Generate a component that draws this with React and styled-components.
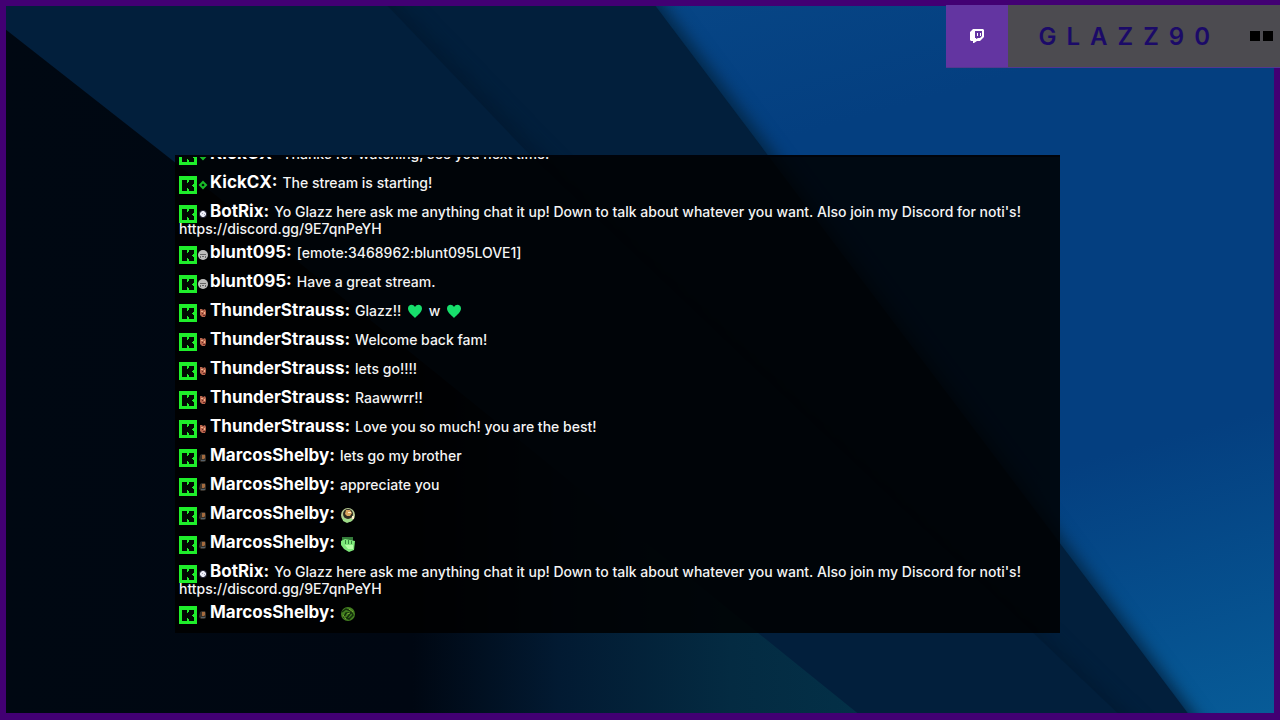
import React from 'react'
import styled, { createGlobalStyle } from 'styled-components'

const GlobalStyle = createGlobalStyle`
    * {
        box-sizing: border-box;
    }
    body {
        margin: 0;
        background: #00060f;
        font-family: Inter, 'Liberation Sans', sans-serif;
    }
`;

const Stage = styled.main`
    position: relative;
    display: grid;
    grid-template-columns: 175fr 885fr 220fr;
    grid-template-rows: 155fr 478fr 87fr;
    height: 100vh;
    overflow: hidden;
`;

const Backdrop = styled.svg`
    position: absolute;
    inset: 0;
    width: 100%;
    height: 100%;
`;

const Frame = styled.div`
    position: absolute;
    inset: 0;
    border: 6px solid #420073;
    border-bottom-width: 7px;
`;

const Channel = styled.header`
    position: relative;
    grid-column: 1 / -1;
    grid-row: 1;
    justify-self: end;
    align-self: start;
    display: flex;
    margin-top: 5px;
    height: 62px;
    background: #4c4b50;
    box-shadow: 0 1px 0 #52388f;
`;

const ChannelLogo = styled.div`
    display: flex;
    align-items: center;
    justify-content: center;
    width: 62px;
    background: #6335a1;
`;

const ChannelName = styled.h1`
    display: flex;
    align-items: center;
    margin: 0;
    padding-left: 30px;
    color: #1b0a68;
    font-size: 24px;
    font-weight: 600;
    letter-spacing: 10px;
`;

const Blocks = styled.div`
    display: flex;
    align-items: center;
    gap: 3px;
    padding: 0 7px 0 30px;
`;

const Block = styled.span`
    width: 10px;
    height: 10px;
    background: #000;
`;

const ChatPanel = styled.section`
    position: relative;
    grid-column: 2;
    grid-row: 2;
    display: flex;
    flex-direction: column;
    justify-content: flex-end;
    min-height: 0;
    padding: 0 4px;
    overflow: hidden;
    border-top: 2px solid #00030a;
    background: rgba(0, 0, 0, 0.86);
`;

const Messages = styled.ul`
    flex-shrink: 0;
    margin: 0;
    padding: 0;
    list-style: none;
`;

const Message = styled.li`
    min-height: 29px;
    padding-bottom: 7px;
    color: #f4f4f4;
    font-size: 14px;
    font-weight: 500;
    line-height: 17px;
`;

const PlatformBadge = styled.svg`
    width: 18px;
    height: 18px;
    margin: -6px 1px -6px 0;
`;

const Avatar = styled.svg`
    width: 10px;
    height: 10px;
    margin: 0 2px -2px 0;
`;

const UserName = styled.strong`
    margin-right: 5px;
    color: #fff;
    font-size: 17px;
    font-weight: 700;
    line-height: 0;
`;

const Link = styled.a`
    color: inherit;
    text-decoration: none;
`;

const Emote = styled.svg`
    width: 16px;
    height: 16px;
    margin: ${({ $spaced }) => ($spaced ? '-6px 2px -3px' : '-6px 0 -4px')};
`;

const Kick = () => (
    <PlatformBadge viewBox="0 0 18 18" aria-label="Kick">
        <path fill="#1fee2b" d="M0 0h18v18H0z" />
        <path fill="#020a03" d="M3 4h5v3h1V6h1V4h5v4h-1v1h-1v1h1v1h1v4h-5v-2H9v-1H8v3H3z" />
    </PlatformBadge>
)

const avatars = {
    kick: <path fill="none" stroke="#19bd29" strokeWidth="2" d="M5 2l3 3-3 3-3-3z" />,
    bot: (
        <>
            <circle cx="5" cy="5" r="4" fill="#2a2c3c" />
            <path fill="#eceef8" d="M4 2h2l2 2v2L6 8H4L2 6V4z" />
            <path fill="#9da2b8" d="M4 4h1v1H4zM6 5h1v1H6z" />
        </>
    ),
    blunt: (
        <>
            <circle cx="5" cy="5" r="5" fill="#bdbdbb" />
            <path fill="#666" d="M2 4h6v1H2zM2 6h1v2H2zM4 6h2v1H4zM7 6h1v2H7z" />
        </>
    ),
    thunder: (
        <>
            <path fill="#b7654d" d="M2 1h2l1 1 2-1 1 2v3l-1 3H4L2 7z" />
            <path fill="#efb38d" d="M3 3h2v1H3zM6 4h1v2H6z" />
            <path fill="#6d2825" d="M4 5h1v1H4zM5 7h2v1H5z" />
        </>
    ),
    marcos: (
        <>
            <path fill="#35302a" d="M2 2l2-1h3l1 2v5L6 9H3L1 7z" />
            <path fill="#a36a3e" d="M4 2h3v3l-1 1H4z" />
            <path fill="#54606a" d="M3 7h4v1H3z" />
        </>
    ),
}

const emotes = {
    heart: (
        <path
            fill="#17df6c"
            d="M8 15C5 12 1 9 1 5.500C1 1.500 6 .5 8 4c2-3.500 7-2.500 7 1.500C15 9 11 12 8 15z"
        />
    ),
    face: (
        <>
            <circle cx="8" cy="8" r="7" fill="#b6c993" />
            <circle cx="8" cy="7" r="5" fill="#2d2a20" />
            <path fill="#d8a45f" d="M6 3h4l2 3-2 3H7L5 7z" />
            <path fill="#9edb88" d="M2 9l3 3h6l3-3-2 5-5 2-4-2z" />
            <path fill="#fff0ca" d="M8 5h3v1H8zM12 9h2v3h-2z" />
        </>
    ),
    fist: (
        <>
            <path fill="#347b3a" d="M2 1h11v4H2z" />
            <path fill="#7ee97a" d="M1 5l4-2 10 2-1 9-5 2-5-3-3-4z" />
            <path fill="#b5ffa6" d="M5 9h8v4H8z" />
            <path fill="#358d3d" d="M5 4h1v4H5zM8 4h1v4H8zM11 5h1v3h-1z" />
        </>
    ),
    ball: (
        <>
            <circle cx="8" cy="8" r="7" fill="#427e20" />
            <path
                fill="none"
                stroke="#142f0c"
                strokeWidth="1.500"
                d="M2 6l4-3 5 2 2 4-4 4-5-2 2-4h5M7 12l5-7"
            />
            <path fill="none" stroke="#79aa34" d="M3 9l3 4M9 3l4 3M7 8l3-1" />
        </>
    ),
}

const Icon = ({ name, spaced }) => (
    <Emote viewBox="0 0 16 16" aria-label={name} $spaced={spaced}>{emotes[name]}</Emote>
)

const BotText = () => (
    <>
        Yo Glazz here ask me anything chat it up! Down to talk about whatever you want. Also join
        my Discord for noti's!{' '}
        <Link href="https://discord.gg/9E7qnPeYH">https://discord.gg/9E7qnPeYH</Link>
    </>
)

const messages = [
    { user: 'KickCX', avatar: 'kick', text: 'Thanks for watching, see you next time!' },
    { user: 'KickCX', avatar: 'kick', text: 'The stream is starting!' },
    { user: 'BotRix', avatar: 'bot', text: <BotText /> },
    { user: 'blunt095', avatar: 'blunt', text: '[emote:3468962:blunt095LOVE1]' },
    { user: 'blunt095', avatar: 'blunt', text: 'Have a great stream.' },
    {
        user: 'ThunderStrauss',
        avatar: 'thunder',
        text: <>Glazz!! <Icon name="heart" spaced /> w <Icon name="heart" spaced /></>,
    },
    { user: 'ThunderStrauss', avatar: 'thunder', text: 'Welcome back fam!' },
    { user: 'ThunderStrauss', avatar: 'thunder', text: 'lets go!!!!' },
    { user: 'ThunderStrauss', avatar: 'thunder', text: 'Raawwrr!!' },
    { user: 'ThunderStrauss', avatar: 'thunder', text: 'Love you so much! you are the best!' },
    { user: 'MarcosShelby', avatar: 'marcos', text: 'lets go my brother' },
    { user: 'MarcosShelby', avatar: 'marcos', text: 'appreciate you' },
    { user: 'MarcosShelby', avatar: 'marcos', text: <Icon name="face" /> },
    { user: 'MarcosShelby', avatar: 'marcos', text: <Icon name="fist" /> },
    { user: 'BotRix', avatar: 'bot', text: <BotText /> },
    { user: 'MarcosShelby', avatar: 'marcos', text: <Icon name="ball" /> },
]

const Background = () => (
    <Backdrop viewBox="0 0 1280 720" preserveAspectRatio="none" aria-hidden="true">
        <defs>
            <linearGradient id="sky" x1="0.5" y1="0" x2="1" y2="1">
                <stop offset="0" stopColor="#074686" />
                <stop offset="0.2" stopColor="#043f80" />
                <stop offset="0.65" stopColor="#043f80" />
                <stop offset="1" stopColor="#075c98" />
            </linearGradient>
            <linearGradient id="floor" gradientUnits="userSpaceOnUse" x1="0" y1="0" x2="860" y2="0">
                <stop offset="0" stopColor="#000812" />
                <stop offset="0.48" stopColor="#000712" />
                <stop offset="0.65" stopColor="#021a32" />
                <stop offset="0.85" stopColor="#042b42" />
                <stop offset="1" stopColor="#033047" />
            </linearGradient>
            <filter
                id="soft"
                x="-20%"
                y="-20%"
                width="140%"
                height="140%"
                colorInterpolationFilters="sRGB"
            >
                <feGaussianBlur stdDeviation="8" />
            </filter>
            <clipPath id="rightOfFold">
                <path d="M382 0L530 155L1125 720H1280V0z" />
            </clipPath>
        </defs>
        <path fill="url(#sky)" d="M0 0h1280v720H0z" />
        <path fill="#032848" filter="url(#soft)" d="M400 -20L644 -20L1206 730H900z" />
        <path fill="#021f3c" d="M0 0H651L1193 720H0z" />
        <g clipPath="url(#rightOfFold)">
            <path fill="#011a33" filter="url(#soft)" d="M300 -20H376L544 155L1144 730H900z" />
        </g>
        <path fill="url(#floor)" d="M0 25L172 160L866 720H0z" />
    </Backdrop>
)

export default function App() {
    return (
        <>
            <GlobalStyle />
            <Stage>
                <Background />
                <Frame />
                <Channel>
                    <ChannelLogo>
                        <svg width="14" height="14" viewBox="0 0 14 14" aria-label="Twitch">
                            <path fill="#fff" d="M3 0h10l1 1v7l-4 4H7l-3 2H3v-2H1l-1-1V3z" />
                            <path fill="#6335a1" d="M5 2h7v5l-2 2H8l-2 1V9H5z" />
                            <path fill="#fff" d="M7 4h1v3H7zM10 4h1v3h-1z" />
                        </svg>
                    </ChannelLogo>
                    <ChannelName>GLAZZ90</ChannelName>
                    <Blocks>
                        <Block />
                        <Block />
                    </Blocks>
                </Channel>
                <ChatPanel>
                    <Messages>
                        {messages.map((m, i) => (
                            <Message key={i}>
                                <Kick />
                                <Avatar viewBox="0 0 10 10">{avatars[m.avatar]}</Avatar>
                                <UserName>{m.user}:</UserName>
                                {m.text}
                            </Message>
                        ))}
                    </Messages>
                </ChatPanel>
            </Stage>
        </>
    )
}
